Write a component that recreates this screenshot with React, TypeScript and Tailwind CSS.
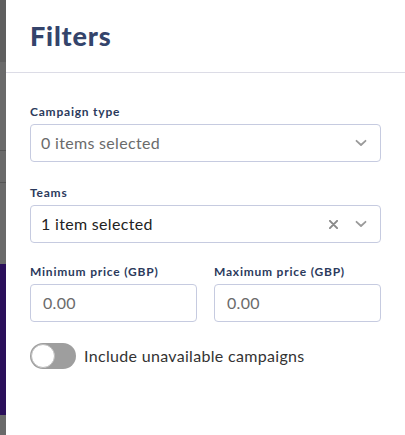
import React from 'react';

const Chevron = () => (
  <svg width="12" height="8" viewBox="0 0 12 8" fill="none">
    <path d="M1.5 1.8 6 6l4.5-4.2" stroke="#9a9a9a" strokeWidth="1.8" strokeLinecap="round" strokeLinejoin="round" />
  </svg>
);

const Cross = () => (
  <svg width="9" height="9" viewBox="0 0 10 10" fill="none">
    <path d="M1 1l8 8M9 1 1 9" stroke="#8a8a8a" strokeWidth="2.2" strokeLinecap="round" />
  </svg>
);

const Label: React.FC<{ children: React.ReactNode }> = ({ children }) => (
  <label className="block text-[12px] font-bold tracking-[0.065em] text-[#2b3a5c] mb-[4px] leading-4">{children}</label>
);

const Select: React.FC<{ value: string; muted?: boolean; clearable?: boolean }> = ({ value, muted, clearable }) => (
  <div className="flex items-center h-[38px] border border-[#c6cbe0] rounded-[4px] pl-[10px] pr-[13px]">
    <span className={`flex-1 text-[16px] tracking-[0.02em] ${muted ? 'text-[#6b6b6b]' : 'text-[#222]'}`}>{value}</span>
    {clearable && (
      <span className="mr-[17px] flex items-center">
        <Cross />
      </span>
    )}
    <Chevron />
  </div>
);

export default function App() {
  return (
    <div className="flex w-[405px] h-[435px] overflow-hidden font-['Lato',sans-serif]">
      {/* dimmed page behind the drawer */}
      <div className="w-[6px] flex flex-col bg-[#6a6a6a]">
        <div className="h-[62px] bg-[#5f5f5f]" />
        <div className="h-[88px]" />
        <div className="h-[33px] border-y border-[#555]" />
        <div className="h-[81px]" />
        <div className="h-[151px] bg-[#2a0f5a]" />
        <div className="flex-1" />
      </div>

      <div className="flex-1 bg-white">
        <div className="h-[73px] border-b border-[#dcdce6] px-6 pt-[20px]">
          <h2 className="text-[27px] font-black text-[#34446b] tracking-[0.03em] leading-8">Filters</h2>
        </div>

        <div className="px-6 pt-[31px] flex flex-col">
          <Label>Campaign type</Label>
          <Select value="0 items selected" muted />

          <div className="mt-[23px]">
            <Label>Teams</Label>
            <Select value="1 item selected" clearable />
          </div>

          <div className="mt-[21px] grid grid-cols-2 gap-[17px]">
            <div>
              <Label>Minimum price (GBP)</Label>
              <div className="h-[38px] border border-[#c6cbe0] rounded-[4px] px-[12px] flex items-center text-[16px] tracking-[0.02em] text-[#6b6b6b]">0.00</div>
            </div>
            <div>
              <Label>Maximum price (GBP)</Label>
              <div className="h-[38px] border border-[#c6cbe0] rounded-[4px] px-[12px] flex items-center text-[16px] tracking-[0.02em] text-[#6b6b6b]">0.00</div>
            </div>
          </div>

          <div className="mt-[21px] flex items-center gap-[8px]">
            <div className="w-[46px] h-[26px] rounded-full bg-[#9e9e9e] p-[1px] flex items-center">
              <div className="w-[24px] h-[24px] rounded-full bg-white border border-[#bdbdbd]" />
            </div>
            <span className="text-[16px] tracking-[0.02em] text-[#333]">Include unavailable campaigns</span>
          </div>
        </div>
      </div>
    </div>
  );
}
